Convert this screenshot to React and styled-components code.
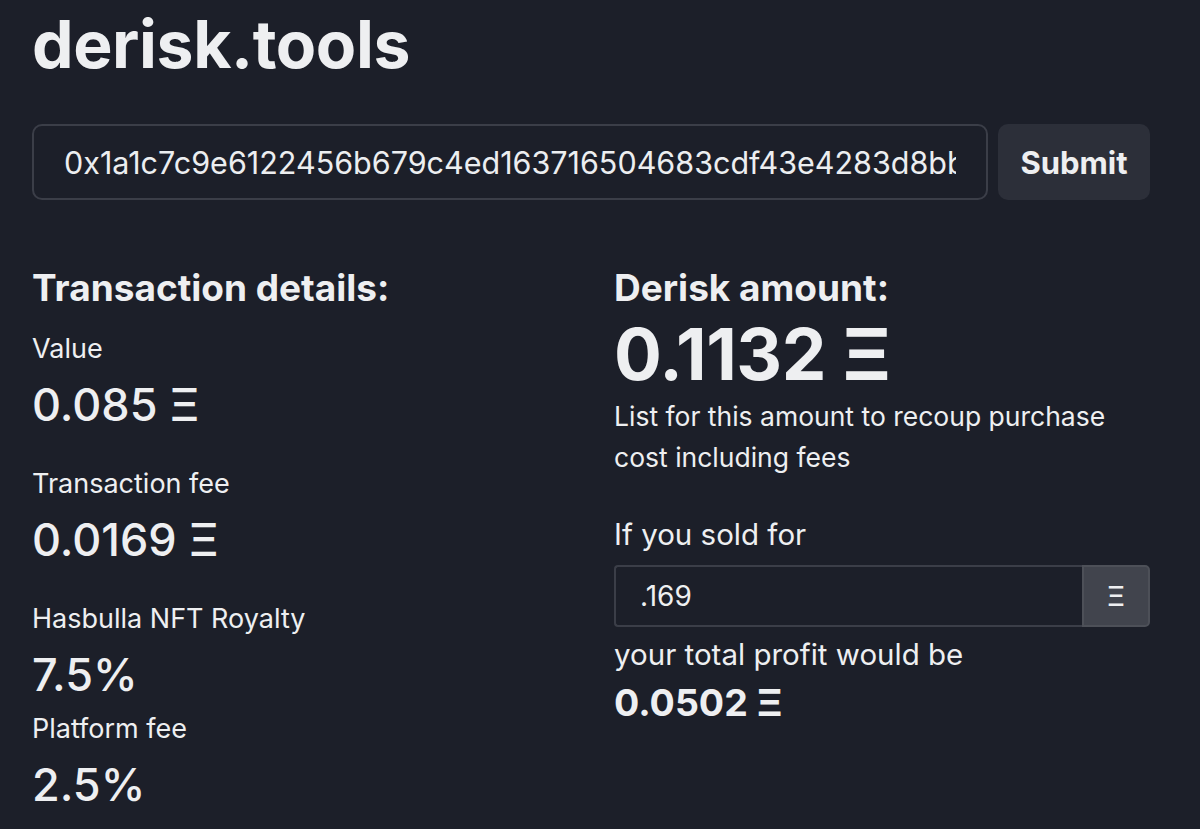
import React from 'react'
import styled, { createGlobalStyle } from 'styled-components'

const GlobalStyle = createGlobalStyle`
  html, body {
    margin: 0;
    padding: 0;
    background: #1c1f29;
    color: #eeeff1;
    font-family: Inter, "Noto Sans", sans-serif;
  }
  * { box-sizing: border-box; }
`

function App() {
  return (
    <Wrapper>
      <GlobalStyle />
      <Title>derisk.tools</Title>
      <SearchRow>
        <HashInput readOnly value="0x1a1c7c9e6122456b679c4ed163716504683cdf43e4283d8bbf2e1c6a0" />
        <SubmitBtn>Submit</SubmitBtn>
      </SearchRow>
      <Columns>
        <Column>
          <Heading>Transaction details:</Heading>
          <Label space={17}>Value</Label>
          <Amount>0.085 Ξ</Amount>
          <Label>Transaction fee</Label>
          <Amount>0.0169 Ξ</Amount>
          <Label>Hasbulla NFT Royalty</Label>
          <Amount>7.5%</Amount>
          <Label space={8}>Platform fee</Label>
          <Amount>2.5%</Amount>
        </Column>
        <Column>
          <Heading>Derisk amount:</Heading>
          <BigAmount>0.1132 Ξ</BigAmount>
          <Note>List for this amount to recoup purchase cost including fees</Note>
          <Prompt space={36}>If you sold for</Prompt>
          <InputGroup>
            <PriceInput readOnly value=".169" />
            <Addon>Ξ</Addon>
          </InputGroup>
          <Prompt space={7}>your total profit would be</Prompt>
          <Profit>0.0502 Ξ</Profit>
        </Column>
      </Columns>
    </Wrapper>
  )
}

export default App

const Wrapper = styled.div`
  padding: 4px 50px 0 32px;
  min-height: 100vh;
`
const Title = styled.h1`
  margin: 0;
  font-size: 66px;
  font-weight: 700;
  letter-spacing: -0.4px;
  line-height: 80px;
`
const SearchRow = styled.div`
  display: flex;
  gap: 10px;
  margin-top: 40px;
  height: 76px;
`
const HashInput = styled.input`
  flex: 1;
  min-width: 0;
  background: #1c1f29;
  border: 2px solid #3b3e48;
  border-radius: 10px;
  color: #eceef0;
  font-family: inherit;
  font-size: 30.5px;
  padding: 0 30px 0 30px;
  outline: none;
`
const SubmitBtn = styled.button`
  width: 152px;
  background: #2c2f39;
  border: none;
  border-radius: 10px;
  color: #eeeff1;
  font-family: inherit;
  font-size: 31px;
  font-weight: 700;
`
const Columns = styled.div`
  display: grid;
  grid-template-columns: 536px 1fr;
  column-gap: 46px;
  margin-top: 62px;
`
const Column = styled.div`
  display: flex;
  flex-direction: column;
`
const Heading = styled.h2`
  margin: 0;
  font-size: 37px;
  font-weight: 700;
  line-height: 52px;
`
const Label = styled.div`
  font-size: 27px;
  line-height: 36px;
  margin-top: ${p => p.space ?? 33}px;
`
const Amount = styled.div`
  font-size: 45px;
  font-weight: 500;
  line-height: 56px;
  margin-top: 10px;
`
const BigAmount = styled.div`
  font-size: 71px;
  font-weight: 700;
  letter-spacing: -0.5px;
  line-height: 76px;
  margin-top: 2px;
`
const Note = styled.p`
  margin: 4px 0 0;
  font-size: 26.5px;
  line-height: 41px;
`
const Prompt = styled.div`
  font-size: 29.5px;
  line-height: 40px;
  margin-top: ${p => p.space}px;
`
const InputGroup = styled.div`
  display: flex;
  height: 62px;
  width: 536px;
  margin-top: 11px;
`
const PriceInput = styled.input`
  flex: 1;
  min-width: 0;
  background: #1c1f29;
  border: 2px solid #3b3e48;
  border-right: none;
  border-radius: 4px 0 0 4px;
  color: #eeeff1;
  font-family: inherit;
  font-size: 28px;
  padding: 0 24px;
  outline: none;
`
const Addon = styled.div`
  width: 68px;
  display: flex;
  align-items: center;
  justify-content: center;
  background: #41444d;
  border: 2px solid #4d5058;
  border-radius: 0 5px 5px 0;
  font-size: 27px;
  font-weight: 500;
`
const Profit = styled.div`
  font-size: 37.5px;
  font-weight: 700;
  line-height: 48px;
  margin-top: 5px;
`
